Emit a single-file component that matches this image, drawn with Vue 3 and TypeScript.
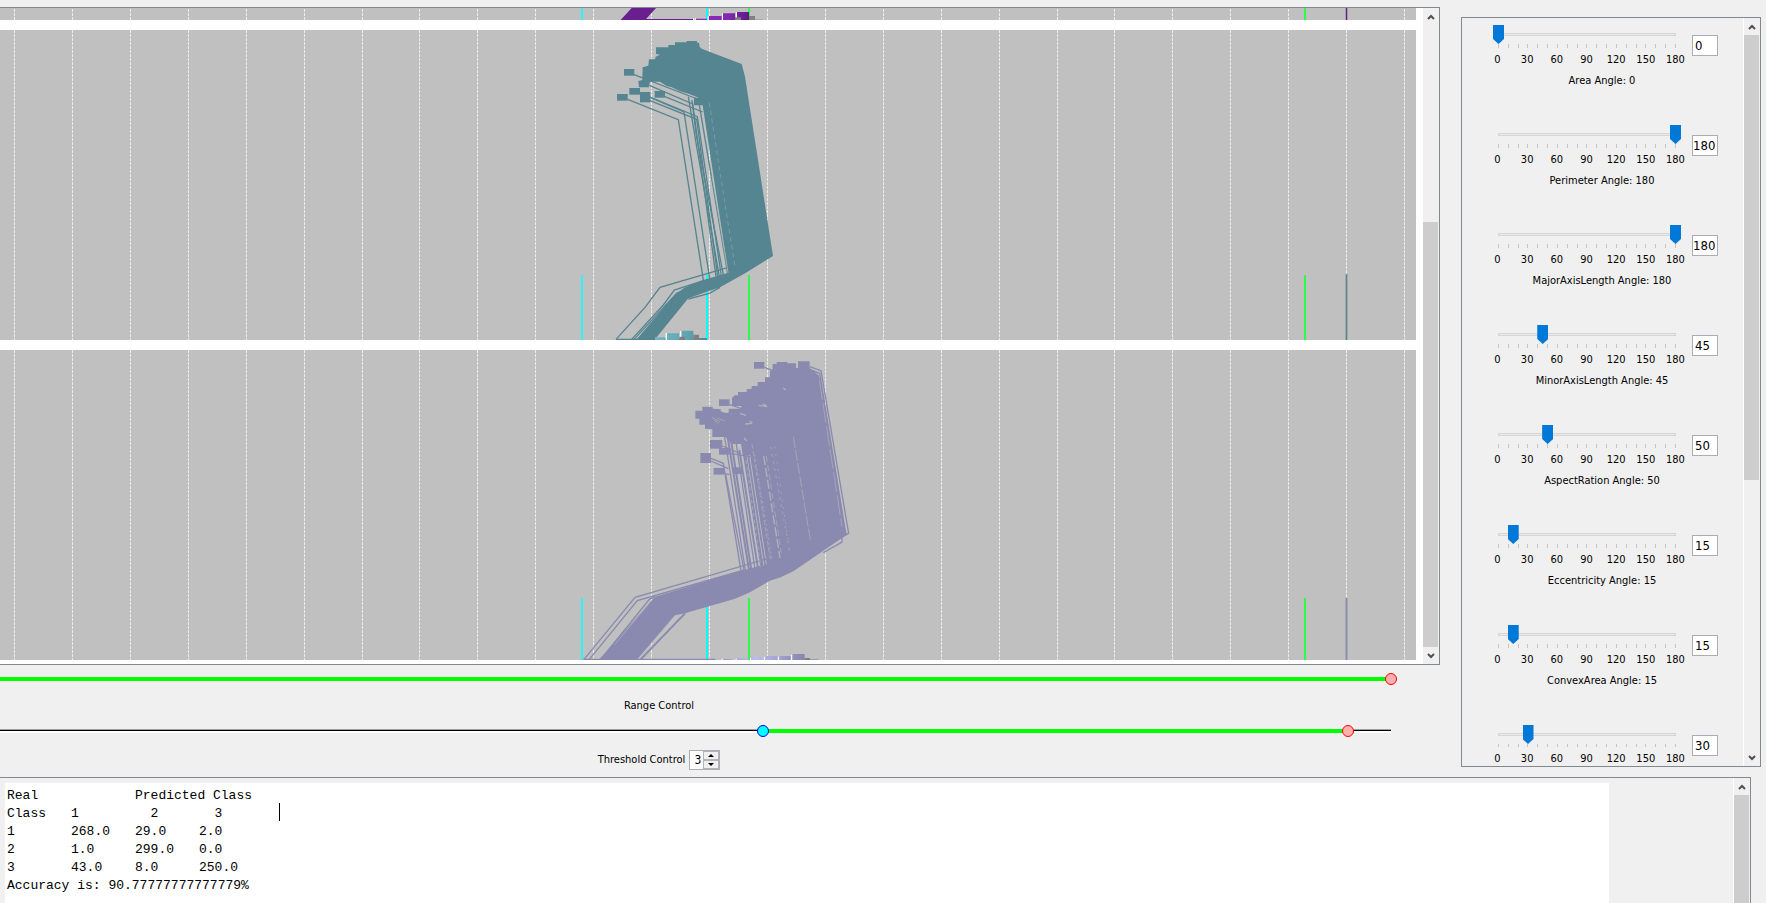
<script setup lang="ts">
import { ref } from 'vue'

interface AngleControl {
  id: string
  name: string
  value: number
}

interface Marker {
  x: number
  color: string
  width: number
}

interface Box {
  x: number
  y: number
  w: number
  h: number
}

const angles = ref<AngleControl[]>([
  { id: 'area', name: 'Area', value: 0 },
  { id: 'perimeter', name: 'Perimeter', value: 180 },
  { id: 'major', name: 'MajorAxisLength', value: 180 },
  { id: 'minor', name: 'MinorAxisLength', value: 45 },
  { id: 'aspect', name: 'AspectRation', value: 50 },
  { id: 'eccentricity', name: 'Eccentricity', value: 15 },
  { id: 'convex', name: 'ConvexArea', value: 15 },
  { id: 'next', name: '', value: 30 },
])

const scale = [0, 30, 60, 90, 120, 150, 180]
const ticks = Array.from({ length: 19 }, (_, i) => i)
const gridLines = Array.from({ length: 25 }, (_, i) => Math.round(14 + i * 57.92) + 0.5)

const markers: Marker[] = [
  { x: 582, color: '#2ff2f6', width: 2 },
  { x: 707, color: '#00ffff', width: 2 },
  { x: 749, color: '#2dfb4a', width: 2 },
  { x: 1305, color: '#2dfb4a', width: 2 },
]

const rangeMax = 1384
const upper = ref(rangeMax)
const low = ref(756)
const high = ref(1341)
const threshold = ref(3)

const tealBoxes: Box[] = [
  { x: 192, y: 207, w: 31, h: 20 },
  { x: 171, y: 282, w: 32, h: 20 },
  { x: 208, y: 264, w: 32, h: 20 },
  { x: 240, y: 276, w: 31, h: 31 },
  { x: 284, y: 273, w: 31, h: 20 },
]
const violetBoxes: Box[] = [
  { x: 582, y: 66, w: 31, h: 20 },
  { x: 477, y: 178, w: 32, h: 20 },
  { x: 450, y: 300, w: 37, h: 26 },
  { x: 477, y: 324, w: 32, h: 20 },
  { x: 421, y: 339, w: 32, h: 30 },
  { x: 461, y: 384, w: 32, h: 20 },
  { x: 519, y: 382, w: 30, h: 20 },
]

const report = ref(
  [
    'Real\t\tPredicted Class',
    'Class\t1\t  2\t  3',
    '1\t268.0\t29.0\t2.0',
    '2\t1.0\t299.0\t0.0',
    '3\t43.0\t8.0\t250.0',
    'Accuracy is: 90.77777777777779%',
  ].join('\n'),
)
</script>

<template>
  <main class="app">
    <div class="top">
      <section class="left">
        <div class="plots">
          <div class="plot-list">
            <svg class="plot plot-cut" role="img" aria-label="Class 1 plot">
              <line v-for="x in gridLines" :key="x" class="grid" :x1="x" :x2="x" y1="1" y2="12" />
              <line v-for="m in markers" :key="m.x" :x1="m.x" :x2="m.x" y1="0" y2="12" :stroke="m.color" :stroke-width="m.width" />
              <line x1="1346.5" x2="1346.5" y1="0" y2="12" stroke="#a39aa9" stroke-width="3" />
              <line x1="1346.5" x2="1346.5" y1="0" y2="12" stroke="#6b1f8f" stroke-width="1" />
              <g transform="translate(560 -8) scale(0.33333)">
                <path fill="#6a1f8e" d="M215 24H288L258 57H402V61H181Z" />
                <path fill="url(#purpleBar)" d="M408 56h32v5h-32zM446 48h39v13h-39zM489 40h36v21h-36zM531 36h36v25h-36z" />
                <path fill="#fff" d="M399 55h3v6h-3zM406 54h2v7h-2zM443 48h3v13h-3zM486 40h3v21h-3zM528 36h3v18h-3z" />
                <path fill="#808080" d="M525 52h18v9h-18zM567 48h18v13h-18z" />
                <path fill="#aaa6b0" d="M585 57h23v3h-23z" />
              </g>
              <defs>
                <linearGradient id="purpleBar">
                  <stop offset="0" stop-color="#8a2fb8" />
                  <stop offset="0.6" stop-color="#8428b2" />
                  <stop offset="1" stop-color="#5f1a85" />
                </linearGradient>
              </defs>
            </svg>

            <svg class="plot" role="img" aria-label="Class 2 plot">
              <defs>
                <linearGradient id="tealBar">
                  <stop offset="0" stop-color="#6fb6c4" />
                  <stop offset="0.6" stop-color="#62a5b3" />
                  <stop offset="1" stop-color="#4b8795" />
                </linearGradient>
              </defs>
              <line v-for="x in gridLines" :key="x" class="grid" :x1="x" :x2="x" y1="0" y2="310" />
              <line v-for="m in markers" :key="m.x" :x1="m.x" :x2="m.x" y1="245" y2="310" :stroke="m.color" :stroke-width="m.width" />
              <line x1="1346.5" x2="1346.5" y1="244" y2="310" stroke="#a0a8ab" stroke-width="3" />
              <line x1="1346.5" x2="1346.5" y1="245" y2="310" stroke="#558590" stroke-width="1" />
              <g transform="translate(560 -30) scale(0.33333)">
                <path
                  fill="#558590"
                  d="M345 127H380V123H411V128H417L419 140L425 146L545 192L555 230L639 768L558 818L480 862L447 873L385 895L285 1018H230L345 884L372 864L430 840L505 818L428 316H402V293H416L388 282L360 274L335 262L320 258L300 245H270L266 262H237L235 243L247 240L248 202L265 197L267 178H285L287 170L300 164L288 162V142H325V135H345Z"
                />
                <rect v-for="b in tealBoxes" :key="b.x" :x="b.x" :y="b.y" :width="b.w" :height="b.h" fill="#558590" />
                <g fill="none" stroke="#558590" stroke-width="4">
                  <path d="M222 224L420 300" />
                  <path d="M203 298L355 359L430 840" />
                  <path d="M270 292L372 336L449 836" />
                  <path d="M270 291L412 350L484 828" />
                  <path d="M270 302L410 358L473 830" />
                  <path d="M268 256L398 312L468 830" />
                  <path d="M315 290L428 336" />
                  <path d="M385 290L410 440L478 830" />
                  <path d="M396 300L408 400L490 825" />
                  <path d="M418 315L503 820" />
                  <path d="M505 802L300 862L255 922L168 1018" />
                  <path d="M430 842L343 870L310 915L215 1018" />
                  <path d="M430 846L350 880L222 1018" />
                  <path d="M385 897L448 880L480 862" />
                  <path d="M168 1018H440" />
                </g>
                <g fill="none" stroke="#8ba3aa" stroke-width="2">
                  <path d="M448 308L482 530L526 806" stroke-dasharray="14 10" />
                  <path d="M456 528L504 818" stroke="#b4bbbd" />
                </g>
                <path fill="url(#tealBar)" d="M285 1012h30v8h-30zM320 1000h37v20h-37zM364 992h36v28h-36zM417 1014h23v6h-23z" />
                <path fill="#fff" d="M317 999h4v21h-4zM360 993h4v18h-4z" />
                <path fill="#808080" d="M358 1010h17v10h-17zM400 1004h17v16h-17z" />
              </g>
            </svg>

            <svg class="plot" role="img" aria-label="Class 3 plot">
              <defs>
                <linearGradient id="violetBar">
                  <stop offset="0" stop-color="#9c9cc9" />
                  <stop offset="0.4" stop-color="#babaf4" />
                  <stop offset="1" stop-color="#8585ad" />
                </linearGradient>
              </defs>
              <line v-for="x in gridLines" :key="x" class="grid" :x1="x" :x2="x" y1="0" y2="310" />
              <line v-for="m in markers" :key="m.x" :x1="m.x" :x2="m.x" y1="248" y2="310" :stroke="m.color" :stroke-width="m.width" />
              <line x1="1346.5" x2="1346.5" y1="248" y2="310" stroke="#a9a9b6" stroke-width="3" />
              <line x1="1346.5" x2="1346.5" y1="248" y2="310" stroke="#8a8ab0" stroke-width="1" />
              <g transform="translate(560 -10) scale(0.33333)">
                <path
                  fill="#8a8ab0"
                  d="M638 72H650V66H682V70H708V84H714V64H749V84L776 106L784 130L856 570L862 583L790 632L700 694L662 712L630 722L570 757L525 776L375 820L345 826L232 958H118L285 770L553 690L620 672L570 345L548 345L543 312H515L497 291H457V268L435 266V254H418V236H406V212H427V200H458V206L482 208V214L495 218H506V206H542L545 198H516V174L524 166H534V156H560V148L575 146V138H593V126H615V112H630V92H638Z"
                />
                <rect v-for="b in violetBoxes" :key="b.x + b.y" :x="b.x" :y="b.y" :width="b.w" :height="b.h" fill="#8a8ab0" />
                <g fill="none" stroke="#8a8ab0" stroke-width="4">
                  <path d="M749 80L783 92L866 580L795 620" />
                  <path d="M749 88L779 100L856 574" />
                  <path d="M613 82L640 92" />
                  <path d="M509 194L545 206" />
                  <path d="M453 355L490 370L543 692" />
                  <path d="M453 363L505 386" />
                  <path d="M487 318L540 340" />
                  <path d="M509 340L570 350" />
                  <path d="M493 400L508 404" />
                  <path d="M497 404L552 690" />
                  <path d="M494 291L556 690" />
                  <path d="M503 291L567 690" stroke-width="6" />
                  <path d="M513 300L574 690" stroke-width="6" />
                  <path d="M529 312L585 688" />
                  <path d="M538 330L594 686" stroke-width="6" />
                  <path d="M552 330L606 682" stroke-width="10" />
                  <path d="M562 330L616 680" stroke-width="6" />
                  <path d="M846 590V606L790 638" />
                  <path d="M625 655L225 772L72 958" />
                  <path d="M553 690L232 782L88 958" />
                  <path d="M375 820L242 958" stroke-width="6" />
                  <path d="M285 770L268 778L122 958" />
                  <path d="M70 958H466" />
                </g>
                <g fill="none" stroke="#b0b0bd" stroke-width="2">
                  <path d="M700 290L752 606" stroke-dasharray="34 6" />
                  <path d="M611 348L660 654" stroke-width="4" stroke-dasharray="28 8" />
                  <path d="M619 348L664 640" stroke-dasharray="18 10" />
                  <path d="M576 312L632 664" stroke-dasharray="14 7" />
                  <path d="M584 345L636 660" stroke-dasharray="6 8" />
                  <path d="M569 400L612 680" stroke-dasharray="5 7" />
                  <path d="M558 360L602 680" stroke-dasharray="12 8" />
                  <path d="M632 320L690 640" stroke-dasharray="8 14" />
                  <path d="M644 320L684 600" stroke-dasharray="5 18" />
                  <path d="M778 120L846 560" stroke-dasharray="60 10" />
                  <path d="M456 232L480 246M462 240L476 252M470 234L494 243" />
                  <path d="M540 220L558 226M556 252L576 250M568 244L578 248M552 294L560 302" stroke-width="4" />
                  <path d="M596 196L622 200M608 192L620 197M670 144L677 150" stroke-width="4" />
                  <path d="M268 790L164 914" />
                  <path d="M338 834L300 880" />
                </g>
                <path fill="url(#violetBar)" d="M489 957h28v4h-28zM531 955h34v6h-34zM576 952h30v9h-30zM616 948h36v13h-36zM658 948h34v13h-34zM698 942h36v19h-36z" />
                <path fill="#fff" d="M485 956h3v5h-3zM527 956h3v5h-3zM570 954h3v7h-3zM612 950h3v11h-3zM654 950h3v11h-3zM693 944h3v17h-3z" />
                <path fill="#808080" d="M734 954h16v7h-16z" />
                <path fill="#9b9bbb" d="M750 957h25v4h-25z" />
              </g>
            </svg>
          </div>
          <div class="bar plots-bar">
            <button type="button" aria-label="Scroll plots up">
              <svg width="8" height="6"><path d="M1 5L4 2L7 5" /></svg>
            </button>
            <span class="thumb"></span>
            <button type="button" aria-label="Scroll plots down">
              <svg width="8" height="6"><path d="M1 1L4 4L7 1" /></svg>
            </button>
          </div>
        </div>

        <div class="range range-upper">
          <span class="fill" :style="{ left: 0, right: `calc(${(1 - upper / rangeMax) * 100}% + 6px)` }"></span>
          <input v-model.number="upper" class="red" type="range" min="0" :max="rangeMax" aria-label="Subset range upper bound" />
        </div>
        <p id="range-label" class="caption">Range Control</p>
        <div class="range">
          <span class="rail"></span>
          <span class="fill" :style="{ left: `${(low / rangeMax) * 100}%`, right: `${(1 - high / rangeMax) * 100}%` }"></span>
          <input v-model.number="low" class="cyan" type="range" min="0" :max="rangeMax" aria-labelledby="range-label" />
          <input v-model.number="high" class="red" type="range" min="0" :max="rangeMax" aria-labelledby="range-label" />
        </div>
        <div class="threshold">
          <label for="threshold">Threshold Control</label>
          <div class="spinner">
            <input id="threshold" v-model.number="threshold" type="text" inputmode="numeric" />
            <div class="steps">
              <button type="button" aria-label="Increase threshold" @click="threshold++">
                <svg width="6" height="3"><path d="M0 3L3 0L6 3Z" /></svg>
              </button>
              <button type="button" aria-label="Decrease threshold" @click="threshold--">
                <svg width="6" height="3"><path d="M0 0L3 3L6 0Z" /></svg>
              </button>
            </div>
          </div>
        </div>
      </section>

      <aside class="angles">
        <div class="angle-list">
          <div v-for="a in angles" :key="a.id" class="angle" :class="{ last: !a.name }">
            <div class="dial">
              <input v-model.number="a.value" type="range" min="0" max="180" :aria-label="`${a.name} angle slider`" />
              <div class="ticks"><i v-for="t in ticks" :key="t"></i></div>
              <div class="scale"><span v-for="s in scale" :key="s"><b>{{ s }}</b></span></div>
              <label v-if="a.name" :for="a.id">{{ a.name }} Angle: {{ a.value }}</label>
            </div>
            <input :id="a.id" v-model.number="a.value" class="value" :class="{ wide: a.value > 99 }" type="text" aria-label="Angle value" />
          </div>
        </div>
        <div class="bar angles-bar">
          <button type="button" aria-label="Scroll angles up">
            <svg width="8" height="6"><path d="M1 5L4 2L7 5" /></svg>
          </button>
          <span class="thumb"></span>
          <span class="track-rest"></span>
          <button type="button" aria-label="Scroll angles down">
            <svg width="8" height="6"><path d="M1 1L4 4L7 1" /></svg>
          </button>
        </div>
      </aside>
    </div>

    <section class="output">
      <div class="paper">
        <textarea v-model="report" aria-label="Classification results" spellcheck="false"></textarea>
        <span class="caret"></span>
      </div>
      <div class="bar output-bar">
        <button type="button" aria-label="Scroll results up">
          <svg width="8" height="6"><path d="M1 5L4 2L7 5" /></svg>
        </button>
        <span class="thumb"></span>
      </div>
    </section>
  </main>
</template>

<style>
body {
  margin: 0;
  background: #f0f0f0;
}
</style>

<style scoped>
.app {
  display: flex;
  flex-direction: column;
  height: 100vh;
  overflow: hidden;
  background: #f0f0f0;
  color: #000;
  font: 11px/14px 'DejaVu Sans Condensed', 'DejaVu Sans', sans-serif;
}
.app * {
  box-sizing: border-box;
}
button {
  padding: 0;
  border: 0;
  background: none;
}
.top {
  display: flex;
  flex: none;
  gap: 21px;
  padding-right: 5px;
}
.left {
  flex: 1;
  min-width: 0;
  padding-top: 7px;
}
.plots {
  display: flex;
  border: 1px solid #828790;
  border-left: 0;
  background: #fff;
}
.plot-list {
  display: flex;
  flex: 1;
  flex-direction: column;
  gap: 10px;
  min-width: 0;
  padding: 0 6px 4px 0;
}
.plot {
  display: block;
  width: 100%;
  height: 310px;
  background: #c0c0c0;
}
.plot-cut {
  height: 12px;
}
.grid {
  stroke: #ececec;
  stroke-width: 1;
  stroke-dasharray: 3 1;
}
.bar {
  display: flex;
  flex: none;
  flex-direction: column;
  width: 17px;
  padding-right: 1px;
  border-left: 1px solid #fff;
  background: #f0f0f0;
}
.bar button {
  display: flex;
  flex: none;
  align-items: center;
  justify-content: center;
  height: 17px;
}
.bar path {
  fill: none;
  stroke: #505050;
  stroke-width: 2;
}
.thumb {
  display: block;
  background: #cdcdcd;
}
.plots-bar .thumb {
  flex: 425;
  margin-top: 197px;
}
.range {
  position: relative;
  height: 14px;
  margin-right: 43px;
}
.range-upper {
  margin-top: 7px;
}
.range input {
  position: absolute;
  inset: 0;
  width: 100%;
  height: 14px;
  margin: 0;
  appearance: none;
  background: none;
  pointer-events: none;
}
.range input::-webkit-slider-thumb {
  width: 12px;
  height: 12px;
  appearance: none;
  border: 1px solid #ff0000;
  border-radius: 50%;
  background: #ffafaf;
  pointer-events: auto;
}
.range .cyan::-webkit-slider-thumb {
  border-color: #0000ff;
  background: #00ffff;
}
.fill {
  position: absolute;
  top: 5px;
  height: 4px;
  background: #00ff00;
}
.rail {
  position: absolute;
  top: 5px;
  right: 6px;
  left: 0;
  height: 4px;
  border-top: 1px solid #a0a0a0;
  background: linear-gradient(#000 1px, #fff 1px);
}
.caption {
  margin: 13px 122px 11px 0;
  text-align: center;
}
.threshold {
  display: flex;
  align-items: center;
  justify-content: center;
  gap: 4px;
  margin: 12px 122px 7px 0;
}
.spinner {
  display: flex;
  width: 31px;
  height: 20px;
  border: 1px solid #abadb3;
  background: #fff;
}
.spinner input {
  flex: 1;
  min-width: 0;
  padding: 0 2px 0 0;
  border: 0;
  background: none;
  font: inherit;
  font-size: 12px;
  text-align: right;
}
.steps {
  display: flex;
  flex-direction: column;
  width: 16px;
}
.steps button {
  display: flex;
  flex: 1;
  align-items: center;
  justify-content: center;
  border: 1px solid #b4b4b4;
  background: #f0f0f0;
}
.angles {
  display: flex;
  flex: none;
  width: 300px;
  margin: 17px 0 10px;
  border: 1px solid #828790;
}
.angle-list {
  flex: 1;
}
.angle {
  display: flex;
  gap: 11px;
  height: 100px;
  padding: 7px 0 0 31px;
}
.last {
  height: 48px;
}
.dial {
  display: flex;
  flex-direction: column;
  width: 188px;
}
.dial input {
  width: 100%;
  height: 19px;
  margin: 0;
  appearance: none;
  background: linear-gradient(#e7eaea, #e7eaea) center 9px / 176px 1px no-repeat, linear-gradient(#d6d6d6, #d6d6d6) center 8px / 178px 3px no-repeat;
}
.dial input::-webkit-slider-thumb {
  width: 11px;
  height: 19px;
  appearance: none;
  background: #0078d7;
  clip-path: polygon(0 0, 100% 0, 100% 14px, 50% 100%, 0 14px);
}
.ticks {
  display: flex;
  justify-content: space-between;
  height: 4px;
  margin: 0 5px;
}
.ticks i {
  width: 1px;
  background: #c4c4c4;
}
.scale {
  display: flex;
  justify-content: space-between;
  margin: 5px 5px 0 4px;
}
.scale span {
  display: flex;
  justify-content: center;
  width: 1px;
}
.scale b {
  flex: none;
  font-weight: 400;
}
.dial label {
  margin-top: 7px;
  padding-left: 30px;
  text-align: center;
  white-space: nowrap;
}
.value {
  width: 26px;
  height: 21px;
  margin-top: 10px;
  padding: 0 2px;
  border: 1px solid #abadb3;
  background: #fff;
  font: inherit;
  font-size: 13px;
}
.value.wide {
  padding: 0;
}
.angles-bar .thumb {
  flex: 445;
}
.track-rest {
  flex: 269;
}
.output {
  display: flex;
  flex: 1;
  min-height: 0;
  margin-right: 15px;
  border-top: 1px solid #828790;
  border-right: 1px solid #828790;
}
.paper {
  position: relative;
  flex: 1;
  margin: 5px 124px 0 5px;
  background: #fff;
}
.paper textarea {
  display: block;
  width: 100%;
  height: 100%;
  padding: 4px 2px;
  border: 0;
  background: none;
  font: 13px/18px 'Liberation Mono', monospace;
  outline: 0;
  resize: none;
  tab-size: 64px;
}
.caret {
  position: absolute;
  top: 20px;
  left: 274px;
  width: 1px;
  height: 18px;
  background: #000;
}
.output-bar .thumb {
  flex: 1;
}
</style>
